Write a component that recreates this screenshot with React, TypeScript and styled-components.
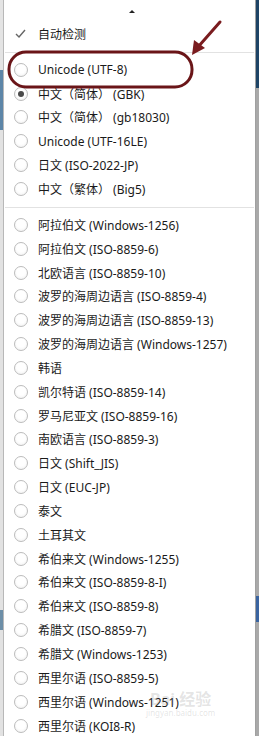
import React from "react";
import styled, { createGlobalStyle } from "styled-components";

const Global = createGlobalStyle`
  html, body { margin: 0; padding: 0; background: #dcdcdc; }
  body { width: 259px; height: 736px; overflow: hidden; font-family: "Noto Sans", "Noto Sans CJK SC", sans-serif; }
`;

const Page = styled.div`
  display: flex;
  width: 259px;
  height: 736px;
  position: relative;
  overflow: hidden;
`;

const LeftStrip = styled.div`
  width: 3px;
  background: linear-gradient(#e4e4e4 0 70px, #5d86a8 70px 130px, #e2e2e2 130px 610px, #6d8fa8 610px 630px, #e2e2e2 630px);
`;

const RightStrip = styled.div`
  width: 3px;
  background: linear-gradient(#1e4466 0 88px, #a9a9a9 88px 596px, #3a64a0 596px 622px, #a9a9a9 622px);
`;

const Panel = styled.div`
  flex: 1;
  background: #fff;
  border-left: 1px solid #b8b8b8;
  border-right: 1px solid #a0a0a0;
  display: flex;
  flex-direction: column;
`;

const ScrollUp = styled.div`
  height: 22px;
  display: flex;
  justify-content: center;
  align-items: center;
  padding-left: 4px;
  flex-shrink: 0;
`;

const Triangle = styled.div`
  width: 0;
  height: 0;
  border-left: 3px solid transparent;
  border-right: 3px solid transparent;
  border-bottom: 3px solid #222;
`;

const Row = styled.div`
  height: 23.85px;
  display: flex;
  align-items: center;
  flex-shrink: 0;
`;

const Mark = styled.div`
  width: 33px;
  display: flex;
  justify-content: center;
  align-items: center;
`;

const Radio = styled.span<{ $on?: boolean }>`
  width: 14px;
  height: 14px;
  box-sizing: border-box;
  border-radius: 50%;
  border: 1px solid #bcbcbc;
  background: radial-gradient(circle at 50% 40%, #ffffff 45%, #ededed 100%);
  display: flex;
  align-items: center;
  justify-content: center;
  &::after {
    content: "";
    width: 6px;
    height: 6px;
    border-radius: 50%;
    background: ${(p) => (p.$on ? "#4a4a4a" : "transparent")};
  }
`;

const Label = styled.span`
  font-size: 12px;
  color: #1a1a1a;
  white-space: nowrap;
  padding-left: 1px;
`;

const Separator = styled.div`
  height: 1px;
  background: #e2e2e2;
  margin: 6px 1px 5px 1px;
  flex-shrink: 0;
`;

const Overlay = styled.svg`
  position: absolute;
  left: 0;
  top: 0;
  pointer-events: none;
`;

const Watermark = styled.div`
  position: absolute;
  left: 146px;
  top: 690px;
  color: rgba(120, 120, 120, 0.2);
  font-family: "Noto Sans", "Noto Sans CJK SC", sans-serif;
  display: flex;
  flex-direction: column;
  align-items: center;
  pointer-events: none;
`;

const WmTop = styled.div`
  font-size: 16px;
  font-weight: 700;
  line-height: 18px;
`;

const WmBottom = styled.div`
  font-size: 8px;
  line-height: 9px;
`;

const group1 = [
  "Unicode (UTF-8)",
  "中文（简体） (GBK)",
  "中文（简体） (gb18030)",
  "Unicode (UTF-16LE)",
  "日文 (ISO-2022-JP)",
  "中文（繁体） (Big5)",
];

const group2 = [
  "阿拉伯文 (Windows-1256)",
  "阿拉伯文 (ISO-8859-6)",
  "北欧语言 (ISO-8859-10)",
  "波罗的海周边语言 (ISO-8859-4)",
  "波罗的海周边语言 (ISO-8859-13)",
  "波罗的海周边语言 (Windows-1257)",
  "韩语",
  "凯尔特语 (ISO-8859-14)",
  "罗马尼亚文 (ISO-8859-16)",
  "南欧语言 (ISO-8859-3)",
  "日文 (Shift_JIS)",
  "日文 (EUC-JP)",
  "泰文",
  "土耳其文",
  "希伯来文 (Windows-1255)",
  "希伯来文 (ISO-8859-8-I)",
  "希伯来文 (ISO-8859-8)",
  "希腊文 (ISO-8859-7)",
  "希腊文 (Windows-1253)",
  "西里尔语 (ISO-8859-5)",
  "西里尔语 (Windows-1251)",
  "西里尔语 (KOI8-R)",
];

export default function App() {
  return (
    <>
      <Global />
      <Page>
        <LeftStrip />
        <Panel>
          <ScrollUp>
            <Triangle />
          </ScrollUp>
          <Row>
            <Mark>
              <svg width="11" height="9" viewBox="0 0 11 9">
                <path d="M1 5 L4 8 L10 1" fill="none" stroke="#666" strokeWidth="1.4" />
              </svg>
            </Mark>
            <Label>自动检测</Label>
          </Row>
          <Separator />
          {group1.map((t, i) => (
            <Row key={t}>
              <Mark>
                <Radio $on={i === 1} />
              </Mark>
              <Label>{t}</Label>
            </Row>
          ))}
          <Separator />
          {group2.map((t) => (
            <Row key={t}>
              <Mark>
                <Radio />
              </Mark>
              <Label>{t}</Label>
            </Row>
          ))}
        </Panel>
        <RightStrip />
        <Watermark>
          <WmTop>Bai 经验</WmTop>
          <WmBottom>jingyan.baidu.com</WmBottom>
        </Watermark>
        <Overlay width="259" height="736" viewBox="0 0 259 736">
          <rect x="9" y="52" width="183" height="35" rx="17" ry="17" fill="none" stroke="#6a1518" strokeWidth="3" />
          <line x1="220" y1="22" x2="198" y2="47" stroke="#7a1c1f" strokeWidth="3" strokeLinecap="round" />
          <polygon points="192,55 194,40 205,48" fill="#7a1c1f" />
        </Overlay>
      </Page>
    </>
  );
}
